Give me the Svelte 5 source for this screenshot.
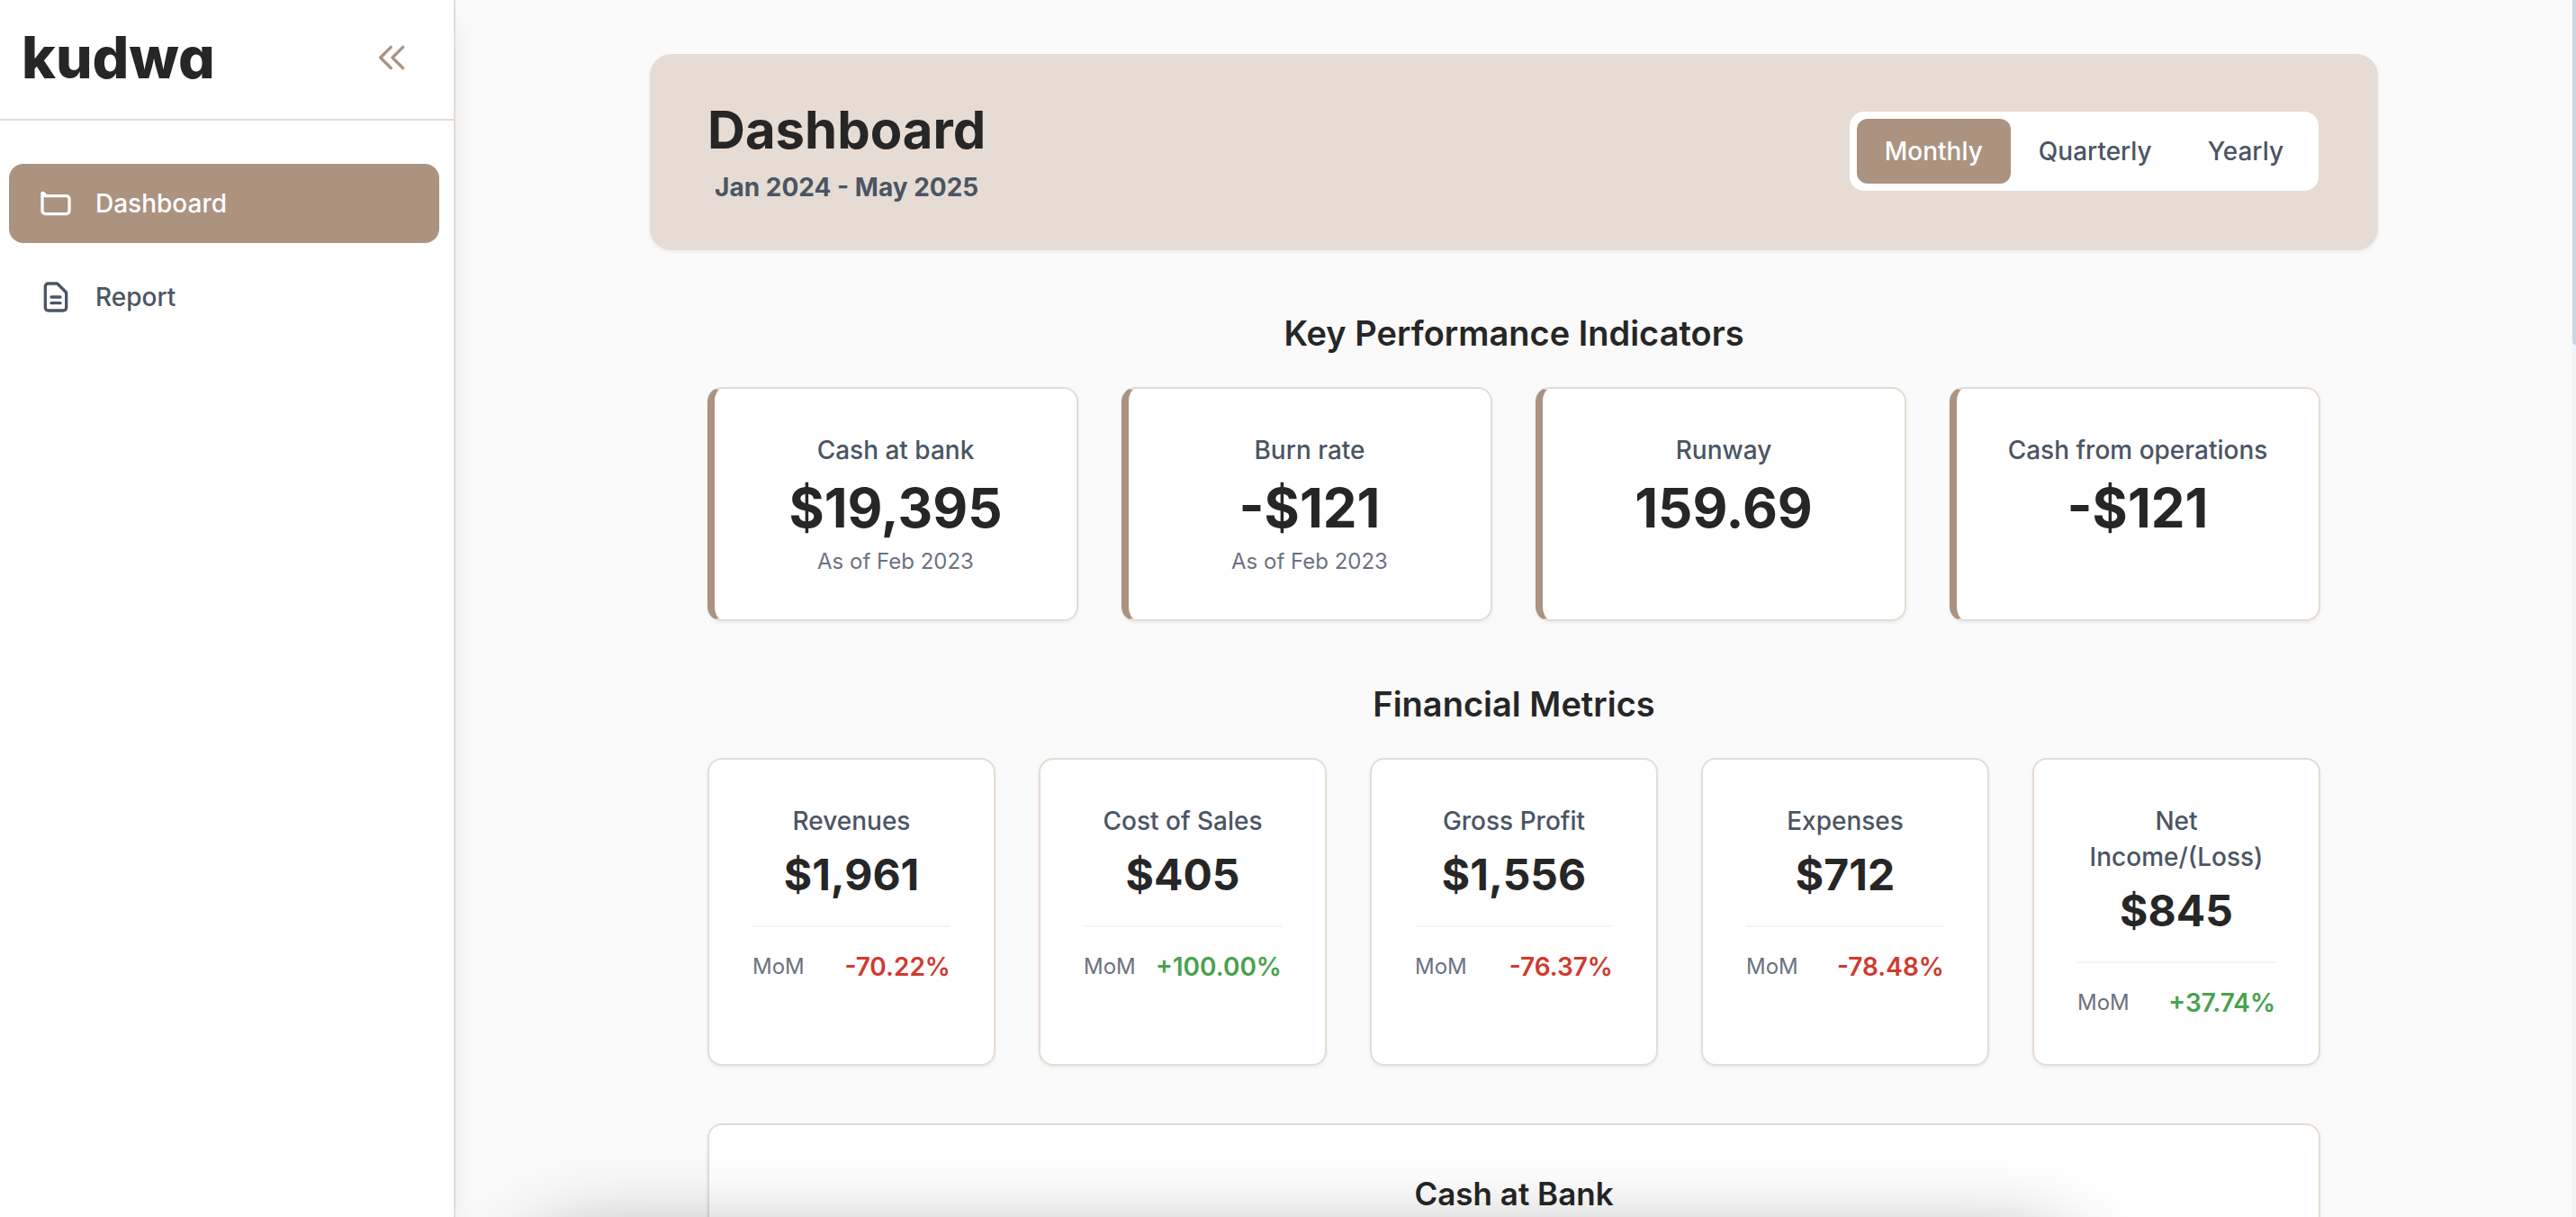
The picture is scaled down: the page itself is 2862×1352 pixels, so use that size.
<script>
  const periods = ['Monthly', 'Quarterly', 'Yearly'];
  let active = $state('Monthly');

  const navItems = [
    {
      label: 'Dashboard',
      current: true,
      icon: 'M3 7v10a2 2 0 002 2h14a2 2 0 002-2V9a2 2 0 00-2-2H5a2 2 0 00-2-2z'
    },
    {
      label: 'Report',
      current: false,
      icon: 'M9 12h6m-6 4h6m2 5H7a2 2 0 01-2-2V5a2 2 0 012-2h5.586a1 1 0 01.707.293l5.414 5.414a1 1 0 01.293.707V19a2 2 0 01-2 2z'
    }
  ];

  const kpis = [
    { label: 'Cash at bank', value: '$19,395', note: 'As of Feb 2023' },
    { label: 'Burn rate', value: '-$121', note: 'As of Feb 2023' },
    { label: 'Runway', value: '159.69', note: '' },
    { label: 'Cash from operations', value: '-$121', note: '' }
  ];

  const metrics = [
    { label: 'Revenues', value: '$1,961', change: '-70.22%' },
    { label: 'Cost of Sales', value: '$405', change: '+100.00%' },
    { label: 'Gross Profit', value: '$1,556', change: '-76.37%' },
    { label: 'Expenses', value: '$712', change: '-78.48%' },
    { label: 'Net Income/(Loss)', value: '$845', change: '+37.74%' }
  ];
</script>

<div class="app">
  <aside class="sidebar">
    <div class="brand">
      <span class="logo">kudwa</span>
      <button class="collapse" type="button" aria-label="Collapse sidebar">
        <svg class="icon" viewBox="0 0 24 24" aria-hidden="true">
          <path d="M11 19l-7-7 7-7m8 14l-7-7 7-7" />
        </svg>
      </button>
    </div>
    <nav class="nav">
      {#each navItems as item}
        <a class="nav-item" class:current={item.current} href="#{item.label.toLowerCase()}">
          <svg class="icon" viewBox="0 0 24 24" aria-hidden="true"><path d={item.icon} /></svg>
          <span>{item.label}</span>
        </a>
      {/each}
    </nav>
  </aside>

  <main class="main">
    <div class="container">
      <header class="hero">
        <div class="hero-text">
          <h1>Dashboard</h1>
          <p>Jan 2024 - May 2025</p>
        </div>
        <div class="toggle" role="group" aria-label="Period">
          {#each periods as period}
            <button
              type="button"
              class:active={active === period}
              aria-pressed={active === period}
              onclick={() => (active = period)}>{period}</button>
          {/each}
        </div>
      </header>

      <div class="sections">
        <section>
          <h2>Key Performance Indicators</h2>
          <div class="grid kpis">
            {#each kpis as kpi}
              <article class="card kpi">
                <h3>{kpi.label}</h3>
                <p class="value">{kpi.value}</p>
                {#if kpi.note}<p class="note">{kpi.note}</p>{/if}
              </article>
            {/each}
          </div>
        </section>

        <section>
          <h2>Financial Metrics</h2>
          <div class="grid metrics">
            {#each metrics as metric}
              <article class="card metric">
                <h3>{metric.label}</h3>
                <p class="value">{metric.value}</p>
                <div class="change">
                  <span class="note">MoM</span>
                  <span class="percent" class:up={metric.change.startsWith('+')}>{metric.change}</span>
                </div>
              </article>
            {/each}
          </div>
        </section>

        <section class="card chart">
          <h2>Cash at Bank</h2>
        </section>
      </div>
    </div>
    <div class="bottom-shade" aria-hidden="true"></div>
  </main>
  <div class="scrollbar" aria-hidden="true"><div class="thumb"></div></div>
</div>

<style>
  :global(body) {
    margin: 0;
    background: #fafafa;
  }

  .app {
    display: flex;
    height: 100vh;
    overflow: hidden;
    background: #fafafa;
    color: #262626;
    font-family: Inter, 'Liberation Sans', sans-serif;
    font-size: 28px;
    line-height: 40px;
  }

  h1, h2, h3, p {
    margin: 0;
  }

  button {
    border: 0;
    padding: 0;
    background: none;
    font: inherit;
    color: inherit;
    cursor: pointer;
  }

  .icon {
    display: block;
    width: 40px;
    height: 40px;
    flex: none;
    fill: none;
    stroke: currentColor;
    stroke-width: 2;
    stroke-linecap: round;
    stroke-linejoin: round;
  }

  /* Sidebar */
  .sidebar {
    position: relative;
    z-index: 1;
    flex: none;
    box-sizing: border-box;
    width: 506px;
    border-right: 2px solid #e6dcd3;
    background: #fff;
    box-shadow: 0 20px 30px -6px rgba(0, 0, 0, 0.1), 0 8px 12px -8px rgba(0, 0, 0, 0.1);
  }

  .brand {
    display: flex;
    align-items: center;
    justify-content: space-between;
    padding: 24px 48px 28px 24px;
    border-bottom: 2px solid #e6dcd3;
  }

  .logo {
    font-size: 64px;
    font-weight: 800;
    line-height: 80px;
    font-feature-settings: 'cv11';
  }

  .collapse {
    color: #ab9380;
  }

  .nav {
    display: flex;
    flex-direction: column;
    gap: 16px;
    padding: 48px 16px 0 10px;
  }

  .nav-item {
    display: flex;
    align-items: center;
    gap: 24px;
    padding: 24px 32px;
    border-radius: 16px;
    color: #4b5563;
    font-weight: 500;
    text-decoration: none;
  }

  .nav-item.current {
    background: #ab9380;
    color: #fff;
  }

  /* Page */
  .main {
    position: relative;
    flex: 1;
    min-width: 0;
    overflow: hidden;
    padding: 60px 48px 0;
  }

  .container {
    max-width: 1920px;
    margin: 0 auto;
  }

  .hero {
    display: flex;
    align-items: center;
    justify-content: space-between;
    padding: 48px 66px 50px 64px;
    border-radius: 24px;
    background: #e6dcd3;
    box-shadow: 0 2px 4px rgba(0, 0, 0, 0.06);
  }

  .hero-text {
    text-align: center;
  }

  h1 {
    font-size: 58px;
    font-weight: 700;
    line-height: 72px;
  }

  .hero-text p {
    margin-top: 8px;
    color: #4b5563;
    font-weight: 700;
  }

  .toggle {
    display: flex;
    padding: 8px;
    border-radius: 16px;
    background: #fff;
  }

  .toggle button {
    padding: 16px 31px;
    border-radius: 12px;
    color: #4b5563;
    font-weight: 500;
  }

  .toggle button.active {
    background: #ab9380;
    color: #fff;
  }

  .sections {
    display: flex;
    flex-direction: column;
    gap: 64px;
    padding: 64px 64px 0;
  }

  h2 {
    font-size: 38px;
    font-weight: 600;
    line-height: 56px;
    text-align: center;
  }

  .grid {
    display: grid;
    gap: 48px;
    margin-top: 32px;
  }

  .kpis {
    grid-template-columns: repeat(4, minmax(0, 1fr));
  }

  .metrics {
    grid-template-columns: repeat(5, minmax(0, 1fr));
  }

  .card {
    padding: 48px;
    border: 2px solid #e6dcd3;
    border-radius: 16px;
    background: #fff;
    box-shadow: 0 2px 4px rgba(0, 0, 0, 0.06);
    text-align: center;
  }

  .kpi {
    border-left: 8px solid #ab9380;
  }

  h3 {
    color: #4b5563;
    font-size: 28px;
    font-weight: 500;
    line-height: 40px;
  }

  .value {
    margin-top: 8px;
    font-weight: 700;
  }

  .kpi .value {
    font-size: 60px;
    line-height: 72px;
  }

  .metric .value {
    font-size: 48px;
    line-height: 64px;
  }

  .note {
    color: #6b7280;
    font-size: 24px;
    line-height: 32px;
  }

  .kpi .note {
    margin-top: 8px;
  }

  .change {
    display: flex;
    align-items: center;
    justify-content: space-between;
    margin-top: 24px;
    padding-top: 24px;
    border-top: 2px solid #f3f4f6;
  }

  .percent {
    color: #cf3a2e;
    font-weight: 600;
  }

  .percent.up {
    color: #48a24f;
  }

  .chart {
    min-height: 600px;
  }

  .chart h2 {
    font-size: 35px;
  }

  /* Soft shade rising from below the bottom edge of the window */
  .bottom-shade {
    position: absolute;
    top: calc(100% + 38px);
    left: 4%;
    right: 24%;
    height: 200px;
    border-radius: 24px;
    box-shadow: 0 0 100px rgba(0, 0, 0, 0.48);
    pointer-events: none;
  }

  .scrollbar {
    flex: none;
    width: 4px;
    background: #f1f5f9;
  }

  .thumb {
    height: 383px;
    border-radius: 0 0 0 4px;
    background: #cbd5e1;
  }
</style>
